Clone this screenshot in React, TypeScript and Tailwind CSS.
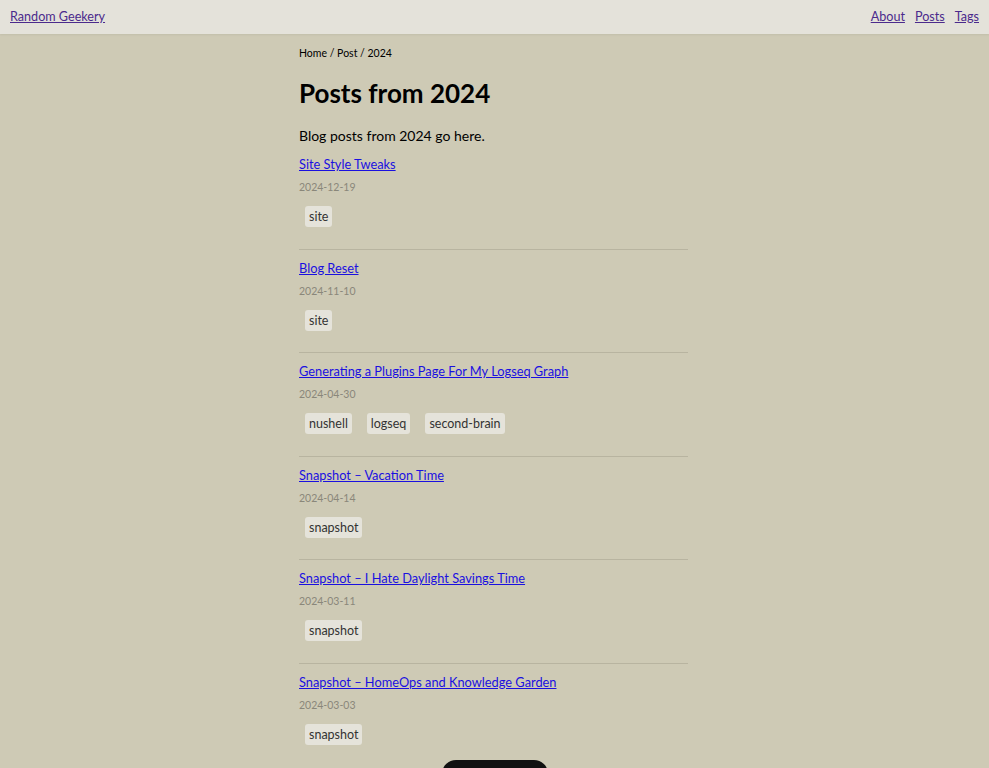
import React from "react";

const posts = [
  { title: "Site Style Tweaks", date: "2024-12-19", tags: ["site"] },
  { title: "Blog Reset", date: "2024-11-10", tags: ["site"] },
  { title: "Generating a Plugins Page For My Logseq Graph", date: "2024-04-30", tags: ["nushell", "logseq", "second-brain"] },
  { title: "Snapshot – Vacation Time", date: "2024-04-14", tags: ["snapshot"] },
  { title: "Snapshot – I Hate Daylight Savings Time", date: "2024-03-11", tags: ["snapshot"] },
  { title: "Snapshot – HomeOps and Knowledge Garden", date: "2024-03-03", tags: ["snapshot"] },
];

export default function App() {
  return (
    <div className="min-h-[768px] bg-[#cecab5] text-black overflow-hidden relative" style={{ fontFamily: "Lato, 'Noto Sans', sans-serif" }}>
      <header className="h-[34px] bg-[#e4e2da] flex items-center justify-between pl-[10px] pr-[10px] text-[12.6px] shadow-[0_1px_2px_rgba(0,0,0,0.06)]">
        <a href="#" className="underline text-[#4b2a8c]">Random Geekery</a>
        <nav className="flex gap-[10px]">
          <a href="#" className="underline text-[#4b2a8c]">About</a>
          <a href="#" className="underline text-[#4b2a8c]">Posts</a>
          <a href="#" className="underline text-[#4b2a8c]">Tags</a>
        </nav>
      </header>
      <main className="w-[389px] ml-[299px] pt-[12px]">
        <div className="text-[10.5px] leading-[14px]">Home / Post / 2024</div>
        <h1 className="text-[26px] font-bold leading-[32px] mt-[17px]">Posts from 2024</h1>
        <p className="text-[14px] leading-[18px] mt-[18px]">Blog posts from 2024 go here.</p>
        <div className="mt-[10px]">
          {posts.map((p, i) => (
            <div key={i} className={i > 0 ? "border-t border-[#b8b4a0] pt-[9px]" : ""}>
              <a href="#" className="underline text-[#1a10e0] text-[12.8px] leading-[18px] block">{p.title}</a>
              <div className="text-[10.5px] leading-[14px] text-[#8a877a] mt-[7px]">{p.date}</div>
              <div className="flex gap-[15px] pl-[6px] mt-[12px] mb-[21.5px]">
                {p.tags.map((t) => (
                  <span key={t} className="bg-[#e5e3da] rounded-[3px] px-[4px] h-[21px] leading-[21px] text-[12.5px] text-[#333]">{t}</span>
                ))}
              </div>
            </div>
          ))}
        </div>
      </main>
      <div className="absolute left-[442px] top-[760px] w-[106px] h-[30px] rounded-[14px] bg-[#111]"></div>
    </div>
  );
}
